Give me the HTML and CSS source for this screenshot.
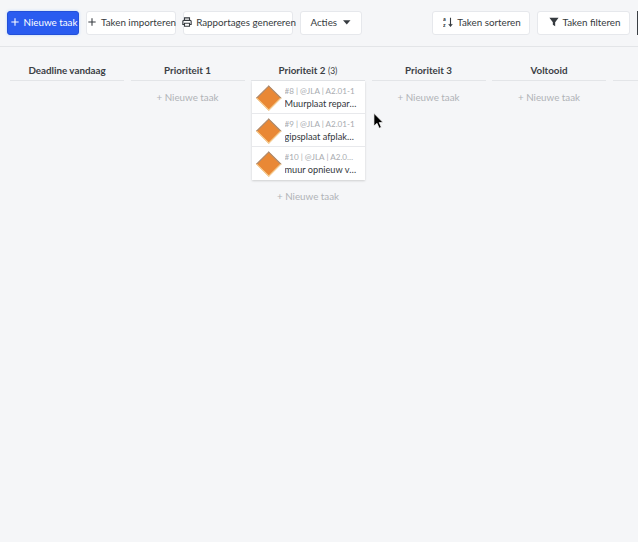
FILE: index.html
```html
<!DOCTYPE html>
<html lang="nl">
<head>
<meta charset="utf-8">
<title>Taken</title>
<link rel="stylesheet" href="styles.css">
</head>
<body>
<div class="toolbar">
  <div class="group">
    <button class="btn primary w71"><svg class="ic" viewBox="0 0 12 12"><path d="M6 .5v11M.5 6h11" fill="none" stroke="currentColor" stroke-width="1.6"/></svg>Nieuwe taak</button>
    <button class="btn w90"><svg class="ic" viewBox="0 0 12 12"><path d="M6 .5v11M.5 6h11" fill="none" stroke="currentColor" stroke-width="1.6"/></svg>Taken importeren</button>
    <button class="btn w110"><svg class="ic wide" viewBox="0 0 12 12"><path d="M3 4V1h6v3M3 9H1V5.2A1.2 1.2 0 0 1 2.2 4h7.6A1.2 1.2 0 0 1 11 5.2V9H9M3 7.4h6V11H3z" fill="none" stroke="currentColor" stroke-width="1.3"/></svg>Rapportages genereren</button>
    <button class="btn w61">Acties<svg class="caret" viewBox="0 0 10 6"><path d="M0 0h10L5 5.5z" fill="currentColor"/></svg></button>
  </div>
  <div class="group">
    <button class="btn w98"><svg class="ic wide" viewBox="0 0 12 12"><text x="0" y="5.2" class="sort-letter">a</text><text x="0" y="11.5" class="sort-letter">z</text><path d="M9 .8v10M6.9 8.4 9 10.9l2.1-2.5" fill="none" stroke="currentColor" stroke-width="1.3"/></svg>Taken sorteren</button>
    <button class="btn w93"><svg class="ic wide" viewBox="0 0 12 12"><path d="M.5 1h11L7.4 6.2V11L4.6 9.4V6.2z" fill="currentColor"/></svg>Taken filteren</button>
    <div class="edge"></div>
  </div>
</div>
<div class="board">
  <section class="col">
    <h2 class="head">Deadline vandaag</h2>
  </section>
  <section class="col">
    <h2 class="head">Prioriteit 1</h2>
    <div class="add">+ Nieuwe taak</div>
  </section>
  <section class="col">
    <h2 class="head">Prioriteit 2 <small>(3)</small></h2>
    <div class="cards">
      <article class="card"><div class="diamond"></div><div class="info"><div class="meta">#8 | @JLA | A2.01-1</div><div class="title">Muurplaat repareren</div></div></article>
      <article class="card"><div class="diamond"></div><div class="info"><div class="meta">#9 | @JLA | A2.01-1</div><div class="title">gipsplaat afplakken en</div></div></article>
      <article class="card"><div class="diamond"></div><div class="info"><div class="meta">#10 | @JLA | A2.01-1 extra</div><div class="title">muur opnieuw verven</div></div></article>
    </div>
    <div class="add after">+ Nieuwe taak</div>
  </section>
  <section class="col">
    <h2 class="head">Prioriteit 3</h2>
    <div class="add">+ Nieuwe taak</div>
  </section>
  <section class="col">
    <h2 class="head">Voltooid</h2>
    <div class="add">+ Nieuwe taak</div>
  </section>
  <section class="col rest">
    <h2 class="head">&nbsp;</h2>
  </section>
</div>
<svg class="cursor" viewBox="0 0 12 20"><path d="M1 1v14l3.4-3 2.3 5.4 2.4-1-2.3-5.2H11z" fill="#000" stroke="#fff" stroke-width=".8"/></svg>
</body>
</html>
```
FILE: styles.css
```css
* { box-sizing: border-box; }
html, body { margin: 0; height: 100%; }
body {
  background: #f5f6f8;
  font-family: Lato, "Liberation Sans", sans-serif;
  color: #363b40;
  width: 638px;
  height: 542px;
  overflow: hidden;
  position: relative;
}
.toolbar {
  height: 47px;
  border-bottom: 1px solid #e3e5e8;
  padding: 10.5px 0 0 7px;
  display: flex;
  justify-content: space-between;
  align-items: flex-start;
}
.group { display: flex; gap: 7px; align-items: flex-start; }
.btn {
  height: 24px;
  padding: 0 0 1px 2px;
  background: #fff;
  border: 1px solid #e6e8ec;
  border-radius: 3px;
  font: 400 9.8px Lato, sans-serif;
  color: #363b40;
  display: flex;
  align-items: center;
  justify-content: center;
  white-space: nowrap;
}
.primary { background: #2a5cf0; border-color: #2350d8; color: #fff; box-shadow: 0 0 3px #b7d4fb; }
.w71 { width: 72px; }
.w90 { width: 90px; }
.w110 { width: 110px; }
.w61 { width: 62px; padding-right: 3px; }
.w98 { width: 98px; }
.w93 { width: 93px; }
.ic { width: 8px; height: 8px; margin-right: 5px; flex: none; }
.ic.wide { width: 10px; height: 10px; margin-right: 4px; }
.sort-letter { font: 900 6.5px Lato, sans-serif; fill: currentColor; }
.caret { width: 7.5px; height: 5px; margin-left: 6px; flex: none; }
.edge { width: 1px; height: 24px; background: #3a3f44; }
.board {
  display: flex;
  gap: 6.5px;
  padding: 16px 0 0 10px;
}
.col { width: 114px; flex: none; }
.col.rest { width: 25px; }
.head {
  margin: 0;
  height: 18px;
  border-bottom: 1px solid #e3e5e8;
  font-size: 9.8px;
  font-weight: 700;
  line-height: 14px;
  text-align: center;
  color: #3b4045;
  white-space: nowrap;
}
.head small { font-size: 8.5px; font-weight: 400; }
.add {
  margin-top: 9px;
  font-size: 9.8px;
  line-height: 14px;
  text-align: center;
  color: #b0b3b7;
}
.add.after { margin-top: 9px; }
.cards { background: #fff; box-shadow: 0 1px 2px rgba(0,0,0,.16); margin-left: .5px; }
.card {
  height: 33px;
  display: flex;
  align-items: center;
  padding-left: 8px;
  border-bottom: 1px solid #e8e9ec;
  background: #fff;
}
.card:last-child { border-bottom: 0; }
.diamond {
  width: 17.5px;
  height: 17.5px;
  margin: 1px 7.5px 0 0;
  flex: none;
  transform: rotate(45deg);
  background: #e98835;
  border-style: solid;
  border-width: 1.5px 1px 1px 1.5px;
  border-color: #a08d7e #f6d59c #f6d59c #a08d7e;
}
.info { min-width: 0; flex: 1; padding: 1px 8px 0 0; }
.meta, .title { white-space: nowrap; overflow: hidden; text-overflow: ellipsis; }
.meta { font-size: 8.1px; line-height: 12px; color: #a8abaf; }
.title { font-size: 9.2px; line-height: 14px; color: #33373b; }
.cursor { position: absolute; left: 373px; top: 112px; width: 11px; height: 19px; }
```
